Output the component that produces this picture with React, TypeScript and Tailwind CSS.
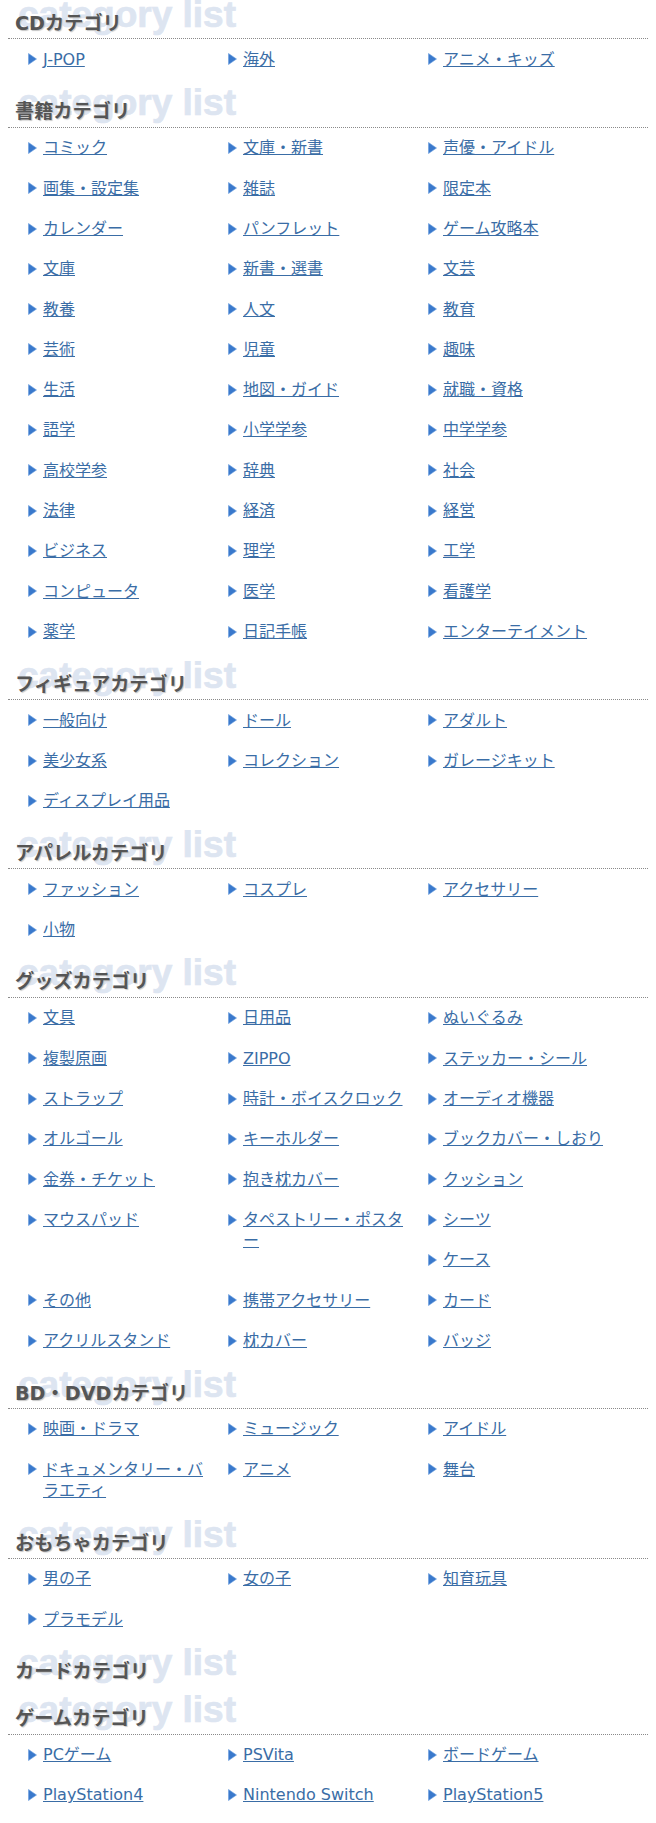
import React from "react";

type Section = { title: string; items: string[] };

const sections: Section[] = [
  { title: "CDカテゴリ", items: ["J-POP", "海外", "アニメ・キッズ"] },
  {
    title: "書籍カテゴリ",
    items: [
      "コミック", "文庫・新書", "声優・アイドル",
      "画集・設定集", "雑誌", "限定本",
      "カレンダー", "パンフレット", "ゲーム攻略本",
      "文庫", "新書・選書", "文芸",
      "教養", "人文", "教育",
      "芸術", "児童", "趣味",
      "生活", "地図・ガイド", "就職・資格",
      "語学", "小学学参", "中学学参",
      "高校学参", "辞典", "社会",
      "法律", "経済", "経営",
      "ビジネス", "理学", "工学",
      "コンピュータ", "医学", "看護学",
      "薬学", "日記手帳", "エンターテイメント",
    ],
  },
  {
    title: "フィギュアカテゴリ",
    items: ["一般向け", "ドール", "アダルト", "美少女系", "コレクション", "ガレージキット", "ディスプレイ用品"],
  },
  { title: "アパレルカテゴリ", items: ["ファッション", "コスプレ", "アクセサリー", "小物"] },
  {
    title: "グッズカテゴリ",
    items: [
      "文具", "日用品", "ぬいぐるみ",
      "複製原画", "ZIPPO", "ステッカー・シール",
      "ストラップ", "時計・ボイスクロック", "オーディオ機器",
      "オルゴール", "キーホルダー", "ブックカバー・しおり",
      "金券・チケット", "抱き枕カバー", "クッション",
      "マウスパッド", "タペストリー・ポスター", "シーツ",
      "ケース", "その他", "携帯アクセサリー",
      "カード", "アクリルスタンド", "枕カバー", "バッジ",
    ],
  },
  {
    title: "BD・DVDカテゴリ",
    items: ["映画・ドラマ", "ミュージック", "アイドル", "ドキュメンタリー・バラエティ", "アニメ", "舞台"],
  },
  { title: "おもちゃカテゴリ", items: ["男の子", "女の子", "知育玩具", "プラモデル"] },
  { title: "カードカテゴリ", items: [] },
  {
    title: "ゲームカテゴリ",
    items: ["PCゲーム", "PSVita", "ボードゲーム", "PlayStation4", "Nintendo Switch", "PlayStation5"],
  },
];

// Blue bullet triangle in front of each link
function Arrow() {
  return (
    <svg width="9" height="12" viewBox="0 0 9 12" className="block">
      <path d="M0.5 0.5 L8.5 6 L0.5 11.5 Z" fill="#3a79cc" stroke="#6a9ddd" strokeWidth="0.6" strokeLinejoin="round" />
    </svg>
  );
}

function CategoryBlock({ section }: { section: Section }) {
  return (
    <div className="pb-[8.77px]">
      <h3 className="relative h-[38.3px] overflow-hidden">
        <span
          className="absolute left-[10px] top-[-4px] select-none whitespace-nowrap text-[37px] font-bold leading-[37px] text-[#dde5f1] [-webkit-text-stroke:0.7px_#dde5f1]"
          style={{ fontFamily: "'Liberation Sans', Arial, sans-serif" }}
          aria-hidden="true"
        >
          category list
        </span>
        <span className="absolute left-[7px] top-[12px] whitespace-nowrap text-[19.2px] font-bold leading-[24px] text-[#555555] [text-shadow:1px_1px_1px_#c4c4c4]">
          {section.title}
        </span>
      </h3>
      {section.items.length > 0 && (
        <ul className="flow-root border-t border-dotted border-[#8a8a8a] pl-[20px]">
          {section.items.map((item) => (
            <li key={item} className="float-left flex w-[200px] items-start py-[9.5px] pr-[15px]">
              <span className="flex h-[21.33px] w-[15px] shrink-0 items-center">
                <Arrow />
              </span>
              <a
                href="#"
                className="text-[16px] leading-[21.33px] text-[#3a6da6] underline decoration-[#3a6da6] [line-break:loose]"
              >
                {item}
              </a>
            </li>
          ))}
        </ul>
      )}
    </div>
  );
}

export default function App() {
  return (
    <div
      className="w-[656px] bg-white px-[8px]"
      style={{ fontFamily: "'DejaVu Sans', 'Noto Sans CJK JP', sans-serif" }}
    >
      {sections.map((s) => (
        <CategoryBlock key={s.title} section={s} />
      ))}
    </div>
  );
}
